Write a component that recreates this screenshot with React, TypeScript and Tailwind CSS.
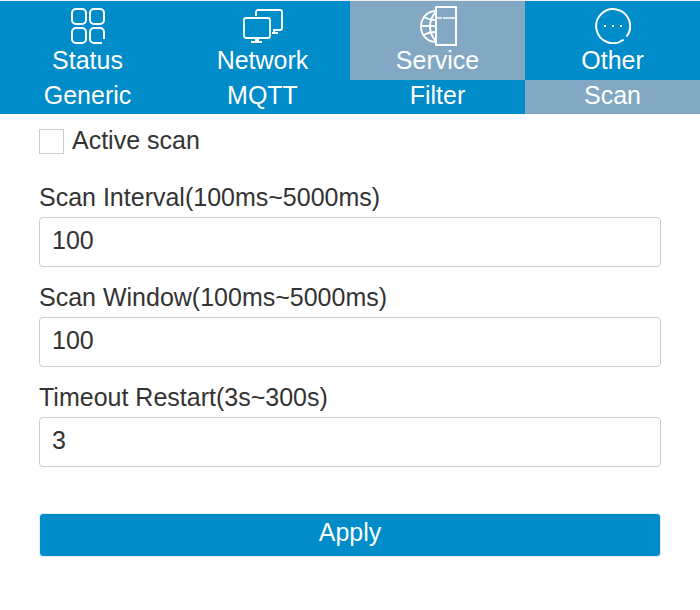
import React, { useState } from "react";

function StatusIcon() {
  return (
    <svg width="36" height="36" viewBox="0 0 36 36" fill="none" stroke="white" strokeWidth="2" aria-hidden="true">
      <rect x="2" y="1" width="14" height="15" rx="4" />
      <rect x="20" y="1" width="14" height="15" rx="4" />
      <rect x="2" y="20" width="14" height="15" rx="4" />
      <path d="M34 31v-7a4 4 0 0 0-4-4h-6a4 4 0 0 0-4 4v7a4 4 0 0 0 4 4h8" />
    </svg>
  );
}

function NetworkIcon() {
  return (
    <svg width="42" height="36" viewBox="0 0 42 36" fill="none" stroke="white" strokeWidth="1.8" aria-hidden="true">
      <rect x="2" y="10" width="26" height="20" rx="2" />
      <path d="M14 8V4a2 2 0 0 1 2-2h22a2 2 0 0 1 2 2v16a2 2 0 0 1-2 2h-6v3M30 25h6" />
      <path d="M13 30h4v3h3v2H9v-2h4z" fill="white" stroke="none" />
    </svg>
  );
}

function ServiceIcon() {
  return (
    <svg width="38" height="40" viewBox="0 0 38 40" fill="none" stroke="white" strokeWidth="2" aria-hidden="true">
      <path d="M17 5C8 5 2 12 2 20.500s6 15.500 15 15.500M17 6c-8 8-8 21 0 29M2 20h15M5 11q5 3 12 3M5 29q5-3 12-3" strokeWidth="1.8" />
      <path d="M17 1h20v38H17z" />
      <path d="M18 12h5M24 12h12" strokeWidth="1.6" />
    </svg>
  );
}

function OtherIcon() {
  return (
    <svg width="36" height="36" viewBox="0 0 36 36" fill="none" stroke="white" strokeWidth="2" aria-hidden="true">
      <path d="M28 32A17 17 0 1 1 32 28" strokeLinecap="round" />
      <path d="M9 18h2M17 18h2M25 18h2" />
    </svg>
  );
}

const tabs = [
  { name: "Status", Icon: StatusIcon },
  { name: "Network", Icon: NetworkIcon },
  { name: "Service", Icon: ServiceIcon },
  { name: "Other", Icon: OtherIcon },
];

const subTabs = ["Generic", "MQTT", "Filter", "Scan"];

function Field({ id, label, initial }: { id: string; label: string; initial: string }) {
  const [value, setValue] = useState(initial);
  return (
    <div className="flex flex-col">
      <label htmlFor={id} className="h-9 leading-8">{label}</label>
      <input id={id} value={value} onChange={(e) => setValue(e.target.value)} className="h-[50px] w-full rounded border border-[#cccccc] bg-white px-3 pb-1 text-[#333333]" />
    </div>
  );
}

export default function App() {
  return (
    <div className="bg-white font-['Liberation_Sans',Arial,sans-serif] text-[25px] text-[#333333]">
      <header className="border-t border-[#eeeeee] bg-[#008bc9] text-white">
        <nav className="grid grid-cols-4">
          {tabs.map(({ name, Icon }) => (
            <button key={name} className={"flex h-[79px] flex-col items-center " + (name === "Service" ? "bg-[#83a8c3]" : "")}>
              <span className="flex h-[45px] items-center justify-center pt-1"><Icon /></span>
              <span className="leading-7">{name}</span>
            </button>
          ))}
        </nav>
        <nav className="grid grid-cols-4">
          {subTabs.map((name) => (
            <button key={name} className={"h-[34px] pb-1 leading-7 " + (name === "Scan" ? "bg-[#83a8c3]" : "")}>{name}</button>
          ))}
        </nav>
      </header>
      <form className="px-[39px] pt-3" onSubmit={(e) => e.preventDefault()}>
        <label className="flex h-[29px] items-start gap-2 leading-7">
          <input type="checkbox" className="mt-[3px] size-[25px] appearance-none border border-[#cccccc] bg-white checked:bg-[#008bc9]" />
          Active scan
        </label>
        <div className="mt-[26px] flex flex-col gap-3.5">
          <Field id="interval" label="Scan Interval(100ms~5000ms)" initial="100" />
          <Field id="window" label="Scan Window(100ms~5000ms)" initial="100" />
          <Field id="timeout" label="Timeout Restart(3s~300s)" initial="3" />
        </div>
        <button className="mt-[46px] h-11 w-full rounded-sm border border-[#e6eef2] bg-[#008bc9] pb-1 text-white">Apply</button>
      </form>
    </div>
  );
}
